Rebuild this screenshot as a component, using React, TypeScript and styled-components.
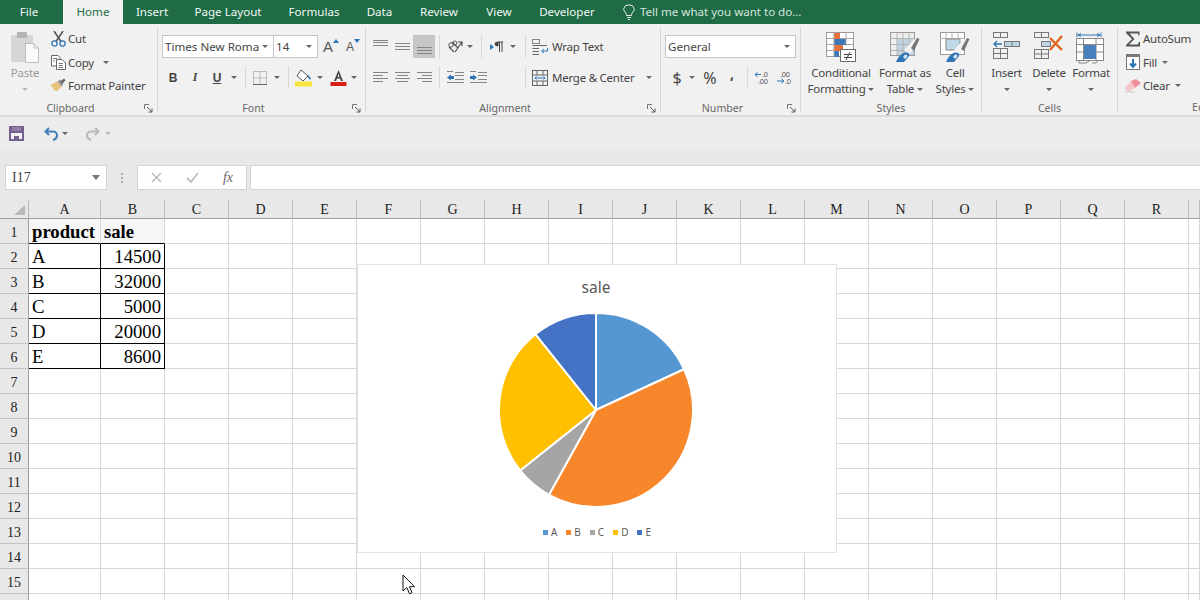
import React from "react";
import styled, { createGlobalStyle } from "styled-components";

const Global = createGlobalStyle`
  html, body { margin: 0; padding: 0; width: 1200px; height: 600px; overflow: hidden; background: #e8e8e8; }
  body { font-family: "Noto Sans", "Open Sans", sans-serif; }
  #root { width: 1200px; height: 600px; overflow: hidden; }
`;

const Page = styled.div`position: relative; width: 1200px; height: 600px; overflow: hidden; background: #e8e8e8;`;

/* ---------- tabs ---------- */
const TabBar = styled.nav`display: flex; height: 24px; background: #1e6b46; color: #f2f7f4; font-size: 11.6px; line-height: 24px; white-space: nowrap;`;
const Tab = styled.div<{ $active?: boolean; $w: number }>`
  width: ${p => p.$w}px; text-align: center; flex: none;
  ${p => p.$active ? "background:#f1f1f1;color:#1e6b46;" : ""}
`;
const TellMe = styled.div`display: flex; align-items: center; gap: 5px; margin-left: 15px; color: #d5e6dc; letter-spacing: -0.03px;`;

/* ---------- ribbon ---------- */
const Ribbon = styled.div`display: flex; padding-top: 4px; box-sizing: border-box; height: 93px; background: #f1f1f1; border-bottom: 2px solid #dcdcdc; color: #444; font-size: 11.5px; letter-spacing: -0.24px; white-space: nowrap; overflow: hidden;`;
const Group = styled.section<{ $w: number; $plain?: boolean }>`
  flex: none; width: ${p => p.$w}px; height: 85px; box-sizing: border-box;
  ${p => p.$plain ? "" : "border-right: 1px solid #d6d6d6;"}
`;
const GroupBody = styled.div<{ $pl?: number; $row?: boolean }>`
  height: 73px; box-sizing: border-box; padding-left: ${p => p.$pl ?? 3}px;
  ${p => p.$row ? "display:flex;" : ""}
`;
const Foot = styled.div`display: flex; height: 14px; align-items: center; font-size: 10.6px; color: #666; line-height: 14px; letter-spacing: 0;`;
const FootLabel = styled.div`flex: 1; text-align: center;`;
const FootSlot = styled.div`width: 16px; flex: none; display: flex; padding-left: 3px; box-sizing: border-box;`;

const ToolRows = styled.div`display: flex; flex-direction: column; gap: 8px; padding-top: 7px;`;
const ToolRow = styled.div`display: flex; height: 23px; align-items: center;`;
const Tool = styled.div<{ $w: number; $on?: boolean }>`
  width: ${p => p.$w}px; height: 23px; flex: none; display: flex; align-items: center; justify-content: center;
  ${p => p.$on ? "background:#c6c6c6;" : ""}
`;
const Spacer = styled.div<{ $w: number }>`width: ${p => p.$w}px; flex: none;`;
const Divider = styled.div<{ $w: number }>`
  width: ${p => p.$w}px; height: 23px; flex: none; display: flex; justify-content: center;
  &::after { content: ""; width: 1px; background: #d8d8d8; }
`;
const Caret = styled.i<{ $w?: number; $dim?: boolean }>`
  width: ${p => p.$w ?? 8}px; height: 23px; flex: none; display: inline-flex; align-items: center; justify-content: center;
  &::after { content: ""; border-left: 3px solid transparent; border-right: 3px solid transparent; border-top: 3px solid ${p => p.$dim ? "#b8b8b8" : "#666"}; }
`;
const BigCaret = styled(Caret)`height: 14px; margin-top: 1px;`;
const InlineCaret = styled.i`
  display: inline-block; width: 0; height: 0; margin-left: 3px; vertical-align: middle;
  border-left: 3px solid transparent; border-right: 3px solid transparent; border-top: 3px solid #666;
`;
const FieldBox = styled.div<{ $w: number }>`
  width: ${p => p.$w}px; height: 23px; box-sizing: border-box; flex: none; background: #fff; border: 1px solid #c6c6c6;
  display: flex; align-items: center; justify-content: space-between; padding: 0 5px 0 2px; font-size: 11.6px; letter-spacing: 0; color: #444;
  & + & { margin-left: -1px; }
`;
const Letter = styled.span<{ $i?: boolean; $u?: boolean }>`
  font-size: 12px; color: #444; font-weight: 700;
  font-style: ${p => p.$i ? "italic" : "normal"};
  font-family: ${p => p.$i ? '"Liberation Serif", serif' : '"Liberation Sans", sans-serif'};
  text-decoration: ${p => p.$u ? "underline" : "none"};
`;
const SizeBtn = styled.div<{ $w: number }>`width: ${p => p.$w}px; height: 23px; flex: none; display: flex; align-items: flex-end; padding-bottom: 4px; box-sizing: border-box; gap: 0;`;
const SizeA = styled.span<{ $px: number }>`font: ${p => p.$px}px/14px "Liberation Sans", sans-serif; color: #555;`;
const SizeTri = styled.svg`align-self: flex-start; margin-top: 4px;`;
const WideTool = styled.div`display: flex; align-items: center; gap: 4px; padding-left: 3px;`;
const Glyph = styled.span<{ $size: number; $b?: boolean; $up?: number }>`
  font-size: ${p => p.$size}px; color: #444; line-height: 1; letter-spacing: 0;
  font-weight: ${p => p.$b ? 700 : 400}; margin-top: ${p => -(p.$up ?? 0)}px;
`;

/* clipboard / editing small list */
const SmallList = styled.div`display: flex; flex-direction: column; margin-top: -1px;`;
const SmallItem = styled.div`display: flex; align-items: center; height: 23.5px; gap: 2px;`;
const SmallIcon = styled.div`width: 16px; height: 16px; display: flex; align-items: center; justify-content: center; flex: none;`;

/* big buttons */
const BigButton = styled.div<{ $w: number; $dim?: boolean }>`
  width: ${p => p.$w}px; flex: none; display: flex; flex-direction: column; align-items: center; padding-top: 4px;
  color: ${p => p.$dim ? "#9a9a9a" : "#444"}; line-height: 16px;
`;
const BigIcon = styled.div`height: 32px; flex: none; margin-bottom: 1px; display: flex; align-items: flex-start; justify-content: center;`;
const BigLine = styled.div`height: 16px; flex: none; text-align: center;`;

/* ---------- quick access ---------- */
const Qat = styled.div`display: flex; height: 33px; align-items: center; padding-left: 9px; background: #ececec; box-sizing: border-box;`;

/* ---------- formula bar ---------- */
const FormulaBar = styled.div`display: flex; height: 50px; padding: 15px 0 10px; box-sizing: border-box; background: #e8e8e8;`;
const NameBox = styled.div`
  width: 102px; margin-left: 5px; height: 25px; box-sizing: border-box; background: #fff; border: 1px solid #d4d4d4; flex: none;
  display: flex; align-items: center; justify-content: space-between; padding: 0 3px 0 6px;
  font: 14px "Liberation Serif", serif; color: #444;
`;
const Dots = styled.div`width: 30px; flex: none; display: flex; flex-direction: column; gap: 2px; align-items: center; justify-content: center;
  & > i { width: 2px; height: 2px; background: #aaa; }
`;
const FuncBox = styled.div`display: flex; width: 110px; flex: none; height: 25px; box-sizing: border-box; background: #fff; border: 1px solid #d4d4d4;`;
const FuncBtn = styled.div`width: 36px; display: flex; align-items: center; justify-content: center;`;
const Fx = styled.span`font: italic 400 14px "Liberation Serif", serif; color: #666;`;
const FormulaInput = styled.div`flex: 1; margin-left: 3px; height: 25px; background: #fff; border: 1px solid #d4d4d4; border-right: 0; box-sizing: border-box;`;

/* ---------- sheet ---------- */
const Sheet = styled.div`position: relative; height: 400px; overflow: hidden; background: #fff;`;
const SheetGrid = styled.div`
  display: grid; grid-template-columns: 29px 72px repeat(17, 64px) 1fr; grid-template-rows: 19px repeat(16, 25px);
  width: 1200px; font-family: "Liberation Serif", serif;
`;
const Corner = styled.div`
  background: #e8e8e8; border-right: 1px solid #b4b4b4; border-bottom: 1px solid #9e9e9e; position: relative;
  &::after { content: ""; position: absolute; right: 3px; bottom: 3px; border-style: solid; border-width: 0 0 10px 11px; border-color: transparent transparent #b8b8b8 transparent; }
`;
const ColHead = styled.div`
  background: #e8e8e8; border-right: 1px solid #bdbdbd; border-bottom: 1px solid #9e9e9e; box-sizing: border-box; padding-top: 1px;
  display: flex; align-items: center; justify-content: center; font-size: 14px; color: #222;
`;
const RowHead = styled.div`
  background: #e8e8e8; border-right: 1px solid #9e9e9e; border-bottom: 1px solid #c4c4c4; box-sizing: border-box; padding-top: 3px;
  display: flex; align-items: center; justify-content: center; font-size: 14px; color: #222;
`;
const Cell = styled.div<{ $rb?: boolean; $bb?: boolean; $num?: boolean; $bold?: boolean; $tint?: boolean }>`
  box-sizing: border-box; padding: 2px 3px 0; white-space: nowrap;
  display: flex; align-items: center; justify-content: ${p => p.$num ? "flex-end" : "flex-start"};
  font-size: 18.67px; color: #000; font-weight: ${p => p.$bold ? 700 : 400};
  background: ${p => p.$tint ? "#f6f6f6" : "#fff"};
  border-right: 1px solid ${p => p.$rb ? "#000" : "#d8d8d8"};
  border-bottom: 1px solid ${p => p.$bb ? "#000" : "#d8d8d8"};
`;

/* ---------- chart ---------- */
const Chart = styled.div`
  position: absolute; left: 357px; top: 64px; width: 480px; height: 289px; box-sizing: border-box; padding: 9px 2px 0 0;
  background: #fff; border: 1px solid #e2e2e2; display: flex; flex-direction: column; align-items: center;
`;
const ChartTitle = styled.div`font: 15.5px/26px "Noto Sans", sans-serif; color: #595959; height: 26px;`;
const PieBox = styled.svg`margin-top: 12px; display: block;`;
const Legend = styled.div`display: flex; gap: 9px; margin-top: 17px; font: 10px/14px "Noto Sans", sans-serif; color: #595959; padding-left: 2px;`;
const LegendItem = styled.div`display: flex; align-items: center; gap: 3px;`;
const Swatch = styled.i<{ $c: string }>`width: 5px; height: 5px; background: ${p => p.$c}; display: block;`;
const Pointer = styled.svg`position: absolute; left: 402px; top: 574px;`;

/* ---------- icons ---------- */
const PasteIcon = () => (
  <svg width="28" height="31" viewBox="0 0 28 31">
    <rect x="0" y="3" width="22" height="27" fill="#d6d6d6" />
    <rect x="6" y="0" width="10" height="6" rx="1" fill="#b4b4b4" />
    <path d="M14.5 11.500H23L27.500 16V30.500H14.500Z" fill="#fafafa" stroke="#bdbdbd" />
    <path d="M23 11.500V16H27.500" fill="none" stroke="#bdbdbd" />
  </svg>
);
const CutIcon = () => (
  <svg width="15" height="16" viewBox="0 0 15 16" fill="none">
    <path d="M3 0L10 10.500M12 0L5 10.500" stroke="#555" strokeWidth="1.6" />
    <circle cx="3.500" cy="12.500" r="2.600" stroke="#2e75b5" strokeWidth="1.300" />
    <circle cx="11.500" cy="12.500" r="2.600" stroke="#2e75b5" strokeWidth="1.300" />
  </svg>
);
const CopyIcon = () => (
  <svg width="15" height="15" viewBox="0 0 15 15" fill="#fff" stroke="#666">
    <path d="M.5.5H7L9 2.500V11H.5Z" />
    <path d="M5.500 4.500H11L14.500 8V14.500H5.500Z" />
    <path d="M2 3.500H6M2 6H4M7.500 8.500H12M7.500 10.500H12M7.500 12.500H12" strokeWidth=".9" />
  </svg>
);
const PainterIcon = () => (
  <svg width="17" height="15" viewBox="0 0 17 15">
    <path d="M1 7L8 3L12 9L7 14Q4 12 3 11L5 9L2 10Z" fill="#e9c37a" />
    <path d="M8 3L11 1L14 6L12 9Z" fill="#9a9a9a" />
    <path d="M11 3L15 0L16.500 2L13 6Z" fill="#666" />
  </svg>
);
const Launcher = () => (
  <svg width="9" height="9" viewBox="0 0 9 9" fill="none" stroke="#777">
    <path d="M.5 5V.5H5" />
    <path d="M3 3L8 8M8 4.500V8H4.500" stroke="#5a5a5a" />
  </svg>
);
const Tri = ({ down }: { down?: boolean }) => (
  <SizeTri width="6" height="4" viewBox="0 0 6 4"><path d={down ? "M0 0H6L3 4Z" : "M0 4L3 0L6 4Z"} fill="#2e75b5" /></SizeTri>
);
const BordersIcon = () => (
  <svg width="14" height="14" viewBox="0 0 14 14" fill="none" stroke="#8a8a8a" strokeDasharray="1 1">
    <rect x=".5" y=".5" width="13" height="13" />
    <path d="M7 .5V13.500M.5 7H13.500" />
    <path d="M0 13.500H14" stroke="#666" strokeDasharray="none" />
  </svg>
);
const FillIcon = () => (
  <svg width="18" height="18" viewBox="0 0 18 18">
    <path d="M6 1L13 7L8 12L2 7Z" fill="#fff" stroke="#555" />
    <path d="M13 6Q16 8 16 10.500Q14 11 13 8Z" fill="#2e75b5" />
    <rect x="0" y="12.500" width="17" height="5" fill="#f6e63c" />
  </svg>
);
const ColorA = () => (
  <svg width="17" height="17" viewBox="0 0 17 17">
    <path d="M8.500 1L13 12H11L10 9.500H7L6 12H4ZM7.600 8H9.400L8.500 4.500Z" fill="#444" />
    <rect x="0.500" y="13" width="16" height="4" fill="#d61f12" />
  </svg>
);
const Lines = ({ rows, w = 15, color = "#858585" }: { rows: [number, number, number][]; w?: number; color?: string }) => (
  <svg width={w} height="15" viewBox={`0 0 ${w} 15`} stroke={color} fill="none">
    {rows.map(([y, a, b], i) => <path key={i} d={`M${a} ${y + .5}H${b}`} />)}
  </svg>
);
const OrientIcon = () => (
  <svg width="17" height="15" viewBox="0 0 17 15" fill="none" stroke="#555">
    <path d="M2 8L7 13M5 3L11 9" strokeWidth="1.200" />
    <circle cx="4" cy="6" r="2.200" strokeWidth="1" />
    <circle cx="8" cy="4" r="2" strokeWidth="1" />
    <path d="M8 13L15 3M11 3H15V7" stroke="#444" strokeWidth="1.100" />
  </svg>
);
const LtrIcon = () => (
  <svg width="14" height="12" viewBox="0 0 14 12">
    <path d="M0 3L4 6L0 9Z" fill="#2e75b5" />
    <path d="M8 1H13M8 1V5Q5 5 5 3T8 1M9.500 1V11M12 1V11" fill="#444" stroke="#444" />
  </svg>
);
const IndentIcon = ({ dir }: { dir: 1 | -1 }) => (
  <svg width="17" height="13" viewBox="0 0 17 13" fill="none">
    <path d="M8 1.500H17M8 4.500H17M8 8.500H17M0 11.500H17M0 .5H6" stroke="#858585" />
    <path d={dir < 0 ? "M0 6.500L4 3.500V5H7V8H4V9.500Z" : "M7 6.500L3 3.500V5H0V8H3V9.500Z"} fill="#2e75b5" />
  </svg>
);
const WrapIcon = () => (
  <svg width="16" height="16" viewBox="0 0 16 16" fill="none" stroke="#666">
    <rect x=".5" y=".5" width="7" height="4" stroke="#888" />
    <path d="M.5 6.500H15M.5 9.500H7M.5 12.500H7M.5 15.500H7" />
    <path d="M15.500 9V12H10.500" stroke="#2e75b5" />
    <path d="M12 10L9.500 12L12 14" stroke="#2e75b5" />
  </svg>
);
const MergeIcon = () => (
  <svg width="16" height="16" viewBox="0 0 16 16" fill="none" stroke="#666">
    <rect x=".5" y=".5" width="15" height="15" />
    <path d="M.5 5H15.500M.5 11H15.500M5 .5V5M11 .5V5M5 11V15.500M11 11V15.500" />
    <path d="M3 8H13M4.500 6.500L3 8L4.500 9.500M11.500 6.500L13 8L11.500 9.500" stroke="#2e75b5" />
  </svg>
);
const DecIcon = ({ inc }: { inc: boolean }) => (
  <svg width="16" height="15" viewBox="0 0 16 15">
    {inc ? (
      <>
        <text x="7" y="6.500" fontFamily="Liberation Sans" fontSize="7.500" fill="#555">.0</text>
        <text x="3" y="14" fontFamily="Liberation Sans" fontSize="7.500" fill="#555">.00</text>
        <path d="M0 4.500H6M2.500 2L0 4.500L2.500 7" stroke="#2e75b5" fill="none" />
      </>
    ) : (
      <>
        <text x="3" y="6.500" fontFamily="Liberation Sans" fontSize="7.500" fill="#555">.00</text>
        <text x="8" y="14" fontFamily="Liberation Sans" fontSize="7.500" fill="#555">.0</text>
        <path d="M0 11H7M4.500 8.500L7 11L4.500 13.500" stroke="#2e75b5" fill="none" />
      </>
    )}
  </svg>
);
const CondIcon = () => (
  <svg width="30" height="30" viewBox="0 0 30 30" fill="none">
    <rect x=".5" y=".5" width="27" height="24" fill="#fff" stroke="#9a9a9a" />
    <rect x="8" y="1" width="6" height="6" fill="#e8703a" />
    <rect x="8" y="7" width="12" height="6" fill="#3c78b8" />
    <rect x="8" y="13" width="9" height="6" fill="#e8703a" />
    <rect x="8" y="19" width="5" height="6" fill="#3c78b8" />
    <path d="M8 .5V25M20 .5V14M.5 6.500H8M14 6.500H28M20 12.500H28M.5 12.500H8M.5 18.500H8" stroke="#a6a6a6" />
    <rect x="14.500" y="17.500" width="15" height="12" fill="#fff" stroke="#6a6a6a" />
    <path d="M18 22.500H26M18 25.500H26M24 20L20 28" stroke="#444" />
  </svg>
);
const TableIcon = () => (
  <svg width="30" height="30" viewBox="0 0 30 30" fill="none">
    <rect x=".5" y=".5" width="24" height="23" fill="#eeeeee" stroke="#9a9a9a" />
    <rect x="7" y="7" width="17" height="16" fill="#c0d4e2" />
    <path d="M.5 6.500H24M.5 12.500H24M.5 18.500H24M7 .5V23M13 .5V23M19 .5V23" stroke="#b4b4b4" />
    <path d="M14 18L24 7L29 10L20 22Z" fill="#f1f1f1" />
    <path d="M21 16L27 6L29.500 7L24 19Z" fill="#767676" />
    <path d="M6 30Q9 22 15 20.500Q20 20 19 24L14 30Z" fill="#2e75b5" />
    <path d="M13 25Q14 22 17 22.500Q18 25 15 27Z" fill="#d9e6f0" />
  </svg>
);
const StylesIcon = () => (
  <svg width="30" height="30" viewBox="0 0 30 30" fill="none">
    <rect x=".5" y=".5" width="24" height="22" fill="#fff" stroke="#9a9a9a" />
    <path d="M.5 6.500H24.500M6 .5V6.500M12 .5V6.500M18 .5V6.500" stroke="#b4b4b4" />
    <rect x="6" y="7" width="14" height="11" fill="#c0d8e6" stroke="#8a8a8a" />
    <path d="M14 18L24 7L29 10L20 22Z" fill="#f1f1f1" />
    <path d="M21 17L27 6L29.500 7L24 19Z" fill="#767676" />
    <path d="M6 30Q9 22 15 20.500Q20 20 19 24L14 30Z" fill="#2e75b5" />
    <path d="M13 25Q14 22 17 22.500Q18 25 15 27Z" fill="#d9e6f0" />
  </svg>
);
const InsertIcon = () => (
  <svg width="28" height="28" viewBox="0 0 28 28" fill="none" stroke="#777">
    <rect x=".5" y=".5" width="14" height="5" />
    <path d="M7.500 .5V5.500" />
    <rect x="11.500" y="9.500" width="15" height="5" fill="#bcd6e4" />
    <path d="M19 9.500V14.500" />
    <path d="M1 12H9M4 9L1 12L4 15" stroke="#2e75b5" strokeWidth="1.300" />
    <rect x=".5" y="16.500" width="14" height="10" />
    <path d="M.5 21.500H14.500M7.500 16.500V26.500" />
  </svg>
);
const DeleteIcon = () => (
  <svg width="30" height="28" viewBox="0 0 30 28" fill="none" stroke="#777">
    <rect x=".5" y=".5" width="14" height="5" />
    <path d="M7.500 .5V5.500" />
    <rect x="7.500" y="9.500" width="9" height="5" fill="#bcd6e4" />
    <rect x=".5" y="17.500" width="14" height="9" />
    <path d="M.5 22H14.500M7.500 17.500V26.500" />
    <path d="M16 6L28 18M28 4L16 18" stroke="#e0661f" strokeWidth="2.400" />
  </svg>
);
const FormatIcon = () => (
  <svg width="30" height="32" viewBox="0 0 30 32" fill="none" stroke="#8a8a8a">
    <path d="M1 .5V5M25 .5V5M2 3H24M5 1.500L2 3L5 4.500M21 1.500L24 3L21 4.500" stroke="#2e75b5" />
    <rect x=".5" y="6.500" width="27" height="22" fill="#fff" />
    <path d="M.5 12.500H27.500M.5 20H27.500M7.500 6.500V28.500M20 6.500V28.500" />
    <rect x="8" y="13" width="12" height="14" fill="#4a7fbe" stroke="none" />
    <path d="M3 28.500V31H10L14 28.500M16 31H20L22 28.500" />
  </svg>
);
const SigmaIcon = () => (
  <svg width="16" height="16" viewBox="0 0 16 16"><path d="M1 0.500H14.500V4.500H13.500L13 2.500H4.500L9.500 8L4 13.500H13L13.700 11H15V15.500H1V14L7 8L1 2Z" fill="#555" /></svg>
);
const FillDown = () => (
  <svg width="15" height="16" viewBox="0 0 15 16" fill="none">
    <rect x=".5" y="1.500" width="13" height="14" fill="#fff" stroke="#777" />
    <rect x="0" y="0" width="14" height="3" fill="#777" />
    <path d="M7 5V13M4 9.500L7 13L10 9.500" stroke="#2e75b5" strokeWidth="2" />
  </svg>
);
const EraserIcon = () => (
  <svg width="16" height="14" viewBox="0 0 16 14">
    <path d="M6 2L11 0L16 4L10 9Z" fill="#ef8f99" />
    <path d="M0 9L6 2L10 9L5 12H2Z" fill="#f6c4c8" />
    <path d="M0 13H10" stroke="#c9c9c9" />
  </svg>
);
const SaveIcon = () => (
  <svg width="15" height="15" viewBox="0 0 15 15">
    <rect x="0" y="0" width="15" height="15" fill="#75608f" />
    <rect x="2" y="7" width="11" height="6" fill="#f1f0f4" />
    <rect x="5" y="10" width="5" height="5" fill="#75608f" />
    <rect x="3" y="1" width="9" height="4" fill="#8f7fa8" />
  </svg>
);
const UndoIcon = ({ redo }: { redo?: boolean }) => (
  <svg width="15" height="14" viewBox="0 0 15 14" fill="none" style={redo ? { transform: "scaleX(-1)" } : undefined}
    stroke={redo ? "#b8b8b8" : "#3f7fba"} strokeWidth="2">
    <path d="M5 1L1.500 4.500L5 8" />
    <path d="M2 4.500H9Q13.500 5 13 9Q12.500 12 9 13" />
  </svg>
);
const BulbIcon = () => (
  <svg width="12" height="16" viewBox="0 0 12 16" fill="none" stroke="#e6f0ea">
    <path d="M3.500 11.500Q3.500 9.500 2 8Q.5 6.500 .8 4.500Q1.500 1 6 .8Q10.500 1 11.200 4.500Q11.500 6.500 10 8Q8.500 9.500 8.500 11.500Z" />
    <path d="M4 13.500H8M5 15.500H7" />
  </svg>
);
const NameCaret = styled(Caret)`width: 14px; &::after { border-left-width: 4px; border-right-width: 4px; border-top-width: 5px; border-top-color: #777; }`;

/* ---------- data ---------- */
const COLUMNS = [..."ABCDEFGHIJKLMNOPQR".split(""), ""];
const TABLE: string[][] = [
  ["product", "sale"],
  ["A", "14500"], ["B", "32000"], ["C", "5000"], ["D", "20000"], ["E", "8600"],
];
const SLICES = [
  { label: "A", value: 14500, color: "#5597d3" },
  { label: "B", value: 32000, color: "#f8862b" },
  { label: "C", value: 5000, color: "#a5a5a5" },
  { label: "D", value: 20000, color: "#ffc000" },
  { label: "E", value: 8600, color: "#4472c4" },
];
const total = SLICES.reduce((s, x) => s + x.value, 0);
function slicePaths() {
  let a = -Math.PI / 2;
  const c = 98, r = 97;
  return SLICES.map(s => {
    const b = a + (s.value / total) * Math.PI * 2;
    const d = `M${c} ${c}L${c + r * Math.cos(a)} ${c + r * Math.sin(a)}A${r} ${r} 0 ${b - a > Math.PI ? 1 : 0} 1 ${c + r * Math.cos(b)} ${c + r * Math.sin(b)}Z`;
    a = b;
    return { d, color: s.color, label: s.label };
  });
}

const Pie = () => (
  <PieBox width="196" height="196" viewBox="0 0 196 196">
    {slicePaths().map(p => <path key={p.label} d={p.d} fill={p.color} stroke="#fff" strokeWidth="2" strokeLinejoin="round" />)}
  </PieBox>
);

const ALIGN_T: [number, number, number][] = [[1, 0, 15], [3, 0, 15], [6, 0, 15]];
const ALIGN_M: [number, number, number][] = [[4, 0, 15], [7, 0, 15], [10, 0, 15]];
const ALIGN_B: [number, number, number][] = [[8, 0, 15], [11, 0, 15], [14, 0, 15]];
const H_L: [number, number, number][] = [[2, 0, 15], [5, 0, 10], [8, 0, 15], [11, 0, 10]];
const H_C: [number, number, number][] = [[2, 0, 15], [5, 2, 13], [8, 0, 15], [11, 2, 13]];
const H_R: [number, number, number][] = [[2, 0, 15], [5, 5, 15], [8, 0, 15], [11, 5, 15]];

const GroupFoot = ({ label, launcher }: { label: string; launcher?: boolean }) => (
  <Foot>
    <FootLabel>{label}</FootLabel>
    {launcher && <FootSlot><Launcher /></FootSlot>}
  </Foot>
);

export default function App() {
  return (
    <Page>
      <Global />
      <TabBar>
        <Tab $w={58}>File</Tab>
        <Spacer $w={5} />
        <Tab $w={60} $active>Home</Tab>
        <Tab $w={58}>Insert</Tab>
        <Tab $w={94}>Page Layout</Tab>
        <Tab $w={78}>Formulas</Tab>
        <Tab $w={53}>Data</Tab>
        <Tab $w={66}>Review</Tab>
        <Tab $w={54}>View</Tab>
        <Tab $w={82}>Developer</Tab>
        <TellMe><BulbIcon />Tell me what you want to do...</TellMe>
      </TabBar>

      <Ribbon>
        <Group $w={158}>
          <GroupBody $row $pl={8}>
            <BigButton $w={34} $dim>
              <BigIcon><PasteIcon /></BigIcon>
              <BigLine>Paste</BigLine>
              <BigCaret $dim />
            </BigButton>
            <Spacer $w={8} />
            <SmallList>
              <SmallItem><SmallIcon><CutIcon /></SmallIcon>Cut</SmallItem>
              <SmallItem><SmallIcon><CopyIcon /></SmallIcon>Copy<Caret $w={20} /></SmallItem>
              <SmallItem><SmallIcon><PainterIcon /></SmallIcon>Format Painter</SmallItem>
            </SmallList>
          </GroupBody>
          <GroupFoot label="Clipboard" launcher />
        </Group>

        <Group $w={208}>
          <GroupBody $pl={4}>
            <ToolRows>
              <ToolRow>
                <FieldBox $w={112}>Times New Roma<Caret $w={6} /></FieldBox>
                <FieldBox $w={45}>14<Caret $w={6} /></FieldBox>
                <Spacer $w={5} />
                <SizeBtn $w={23}><SizeA $px={15}>A</SizeA><Tri /></SizeBtn>
                <SizeBtn $w={16}><SizeA $px={12}>A</SizeA><Tri down /></SizeBtn>
              </ToolRow>
              <ToolRow>
                <Spacer $w={-1} />
                <Tool $w={22}><Letter>B</Letter></Tool>
                <Tool $w={22}><Letter $i>I</Letter></Tool>
                <Tool $w={22}><Letter $u>U</Letter></Tool>
                <Caret $w={12} />
                <Divider $w={10} />
                <Tool $w={20}><BordersIcon /></Tool>
                <Caret $w={14} />
                <Divider $w={8} />
                <Tool $w={24}><FillIcon /></Tool>
                <Caret $w={8} />
                <Tool $w={28}><ColorA /></Tool>
                <Caret $w={4} />
              </ToolRow>
            </ToolRows>
          </GroupBody>
          <GroupFoot label="Font" launcher />
        </Group>

        <Group $w={295}>
          <GroupBody>
            <ToolRows>
              <ToolRow>
                <Tool $w={22}><Lines rows={ALIGN_T} /></Tool>
                <Tool $w={22}><Lines rows={ALIGN_M} /></Tool>
                <Tool $w={22} $on><Lines rows={ALIGN_B} /></Tool>
                <Divider $w={8} />
                <Tool $w={24}><OrientIcon /></Tool>
                <Caret $w={6} />
                <Divider $w={16} />
                <Tool $w={16}><LtrIcon /></Tool>
                <Caret $w={16} />
                <Divider $w={8} />
                <WideTool><WrapIcon />Wrap Text</WideTool>
              </ToolRow>
              <ToolRow>
                <Tool $w={22}><Lines rows={H_L} /></Tool>
                <Tool $w={22}><Lines rows={H_C} /></Tool>
                <Tool $w={22}><Lines rows={H_R} /></Tool>
                <Divider $w={8} />
                <Tool $w={24}><IndentIcon dir={-1} /></Tool>
                <Tool $w={22}><IndentIcon dir={1} /></Tool>
                <Spacer $w={32} />
                <Divider $w={8} />
                <WideTool><MergeIcon />Merge &amp; Center<Caret $w={22} /></WideTool>
              </ToolRow>
            </ToolRows>
          </GroupBody>
          <GroupFoot label="Alignment" launcher />
        </Group>

        <Group $w={140}>
          <GroupBody $pl={4}>
            <ToolRows>
              <ToolRow>
                <FieldBox $w={131}>General<Caret $w={6} /></FieldBox>
              </ToolRow>
              <ToolRow>
                <Tool $w={24}><Glyph $size={16}>$</Glyph></Tool>
                <Caret $w={6} />
                <Tool $w={30}><Glyph $size={16}>%</Glyph></Tool>
                <Tool $w={14}><Glyph $size={14} $b $up={8}>,</Glyph></Tool>
                <Divider $w={16} />
                <Tool $w={16}><DecIcon inc /></Tool>
                <Tool $w={28}><DecIcon inc={false} /></Tool>
              </ToolRow>
            </ToolRows>
          </GroupBody>
          <GroupFoot label="Number" launcher />
        </Group>

        <Group $w={181}>
          <GroupBody $row $pl={8}>
            <BigButton $w={64}>
              <BigIcon><CondIcon /></BigIcon>
              <BigLine>Conditional</BigLine>
              <BigLine>Formatting<InlineCaret /></BigLine>
            </BigButton>
            <BigButton $w={64}>
              <BigIcon><TableIcon /></BigIcon>
              <BigLine>Format as</BigLine>
              <BigLine>Table<InlineCaret /></BigLine>
            </BigButton>
            <BigButton $w={36}>
              <BigIcon><StylesIcon /></BigIcon>
              <BigLine>Cell</BigLine>
              <BigLine>Styles<InlineCaret /></BigLine>
            </BigButton>
          </GroupBody>
          <GroupFoot label="Styles" />
        </Group>

        <Group $w={136}>
          <GroupBody $row>
            <BigButton $w={43}>
              <BigIcon><InsertIcon /></BigIcon>
              <BigLine>Insert</BigLine>
              <BigCaret $w={8} />
            </BigButton>
            <BigButton $w={42}>
              <BigIcon><DeleteIcon /></BigIcon>
              <BigLine>Delete</BigLine>
              <BigCaret $w={8} />
            </BigButton>
            <BigButton $w={42}>
              <BigIcon><FormatIcon /></BigIcon>
              <BigLine>Format</BigLine>
              <BigCaret $w={8} />
            </BigButton>
          </GroupBody>
          <GroupFoot label="Cells" />
        </Group>

        <Group $w={82} $plain>
          <GroupBody $pl={7}>
            <SmallList>
              <SmallItem><SmallIcon><SigmaIcon /></SmallIcon>AutoSum</SmallItem>
              <SmallItem><SmallIcon><FillDown /></SmallIcon>Fill<InlineCaret /></SmallItem>
              <SmallItem><SmallIcon><EraserIcon /></SmallIcon>Clear<InlineCaret /></SmallItem>
            </SmallList>
          </GroupBody>
          <Foot><Spacer $w={74} />Editing</Foot>
        </Group>
      </Ribbon>

      <Qat>
        <SaveIcon />
        <Spacer $w={20} />
        <UndoIcon />
        <Caret $w={12} />
        <Spacer $w={14} />
        <UndoIcon redo />
        <Caret $w={16} $dim />
      </Qat>

      <FormulaBar>
        <NameBox>I17<NameCaret /></NameBox>
        <Dots><i /><i /><i /></Dots>
        <FuncBox>
          <FuncBtn><svg width="11" height="11" viewBox="0 0 11 11" stroke="#bdbdbd" strokeWidth="1.600"><path d="M1 1L10 10M10 1L1 10" /></svg></FuncBtn>
          <FuncBtn><svg width="13" height="11" viewBox="0 0 13 11" fill="none" stroke="#bdbdbd" strokeWidth="1.800"><path d="M1 6L5 10L12 1" /></svg></FuncBtn>
          <FuncBtn><Fx>fx</Fx></FuncBtn>
        </FuncBox>
        <FormulaInput />
      </FormulaBar>

      <Sheet>
        <SheetGrid>
          <Corner />
          {COLUMNS.map((c, i) => <ColHead key={i}>{c}</ColHead>)}
          {Array.from({ length: 16 }, (_, r) => (
            <React.Fragment key={r}>
              <RowHead>{r < 15 ? r + 1 : null}</RowHead>
              {COLUMNS.map((_c, ci) => {
                const row = TABLE[r];
                const inTable = !!row && ci < 2;
                return (
                  <Cell
                    key={ci}
                    $rb={inTable && r > 0}
                    $bb={inTable}
                    $num={inTable && r > 0 && ci === 1}
                    $bold={inTable && r === 0}
                    $tint={inTable && r === 0}
                  >
                    {inTable ? row[ci] : null}
                  </Cell>
                );
              })}
            </React.Fragment>
          ))}
        </SheetGrid>
        <Chart>
          <ChartTitle>sale</ChartTitle>
          <Pie />
          <Legend>
            {SLICES.map(s => <LegendItem key={s.label}><Swatch $c={s.color} />{s.label}</LegendItem>)}
          </Legend>
        </Chart>
      </Sheet>

      <Pointer width="14" height="21" viewBox="0 0 14 21">
        <path d="M1 1V17L4.800 13.500L7.500 19.800L10 18.700L7.400 12.700H12.500Z" fill="#fff" stroke="#111" strokeWidth="1" />
      </Pointer>
    </Page>
  );
}
